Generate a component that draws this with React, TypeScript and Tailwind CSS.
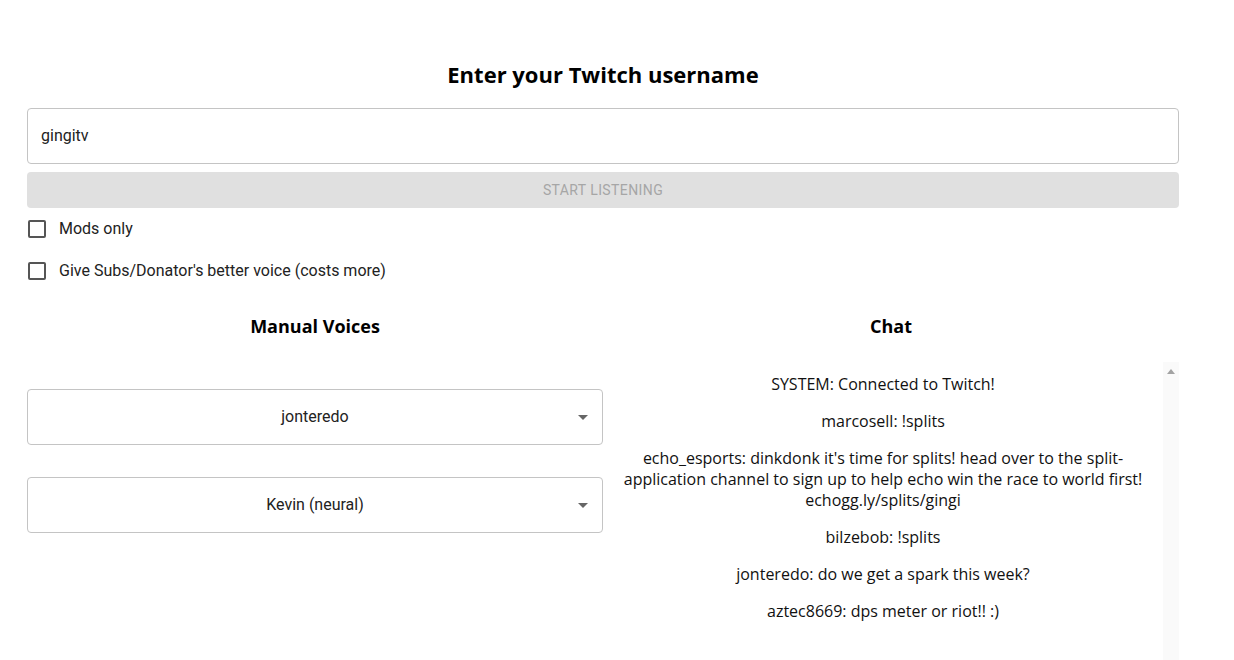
const chat = [
  "SYSTEM: Connected to Twitch!",
  "marcosell: !splits",
  "echo_esports: dinkdonk it's time for splits! head over to the split-application channel to sign up to help echo win the race to world first! echogg.ly/splits/gingi",
  "bilzebob: !splits",
  "jonteredo: do we get a spark this week?",
  "aztec8669: dps meter or riot!! :)",
];

const Check = ({ label }: { label: string }) => (
  <label className="flex items-center gap-[13px] h-[42px] text-[16px] text-[#222]">
    <span className="w-[18px] h-[18px] border-2 border-[#555] rounded-[2px]" />
    {label}
  </label>
);

const Select = ({ value }: { value: string }) => (
  <div className="relative h-[56px] border border-[#c4c4c4] rounded flex items-center justify-center text-[16px] text-[#222]">
    {value}
    <span className="absolute right-[14px] top-[25px] w-0 h-0 border-l-[5px] border-r-[5px] border-t-[5px] border-l-transparent border-r-transparent border-t-[#666]" />
  </div>
);

export default function App() {
  return (
    <div className="h-[660px] bg-white overflow-hidden" style={{ fontFamily: "Roboto, sans-serif" }}>
      <div className="w-[1152px] ml-[27px] pt-[58px]">
        <h1 className="text-center text-[22px] font-bold text-black leading-[32px]" style={{ fontFamily: "'Open Sans', sans-serif" }}>
          Enter your Twitch username
        </h1>
        <div className="mt-[18px] h-[56px] border border-[#c4c4c4] rounded flex items-center px-[13px] text-[16px] text-[#222]">gingitv</div>
        <div className="mt-[8px] h-[36px] bg-[#e0e0e0] rounded flex items-center justify-center text-[14px] tracking-[0.4px] text-[#a6a6a6]">
          START LISTENING
        </div>
        <div className="mt-[0px] pl-[1px]">
          <Check label="Mods only" />
          <Check label="Give Subs/Donator's better voice (costs more)" />
        </div>
        <div className="grid grid-cols-2 mt-[20px]">
          <div>
            <h2 className="text-center text-[18px] font-bold leading-[28px] text-black" style={{ fontFamily: "'Open Sans', sans-serif" }}>Manual Voices</h2>
            <div className="mt-[49px] flex flex-col gap-[32px]">
              <Select value="jonteredo" />
              <Select value="Kevin (neural)" />
            </div>
          </div>
          <div>
            <h2 className="text-center text-[18px] font-bold leading-[28px] text-black" style={{ fontFamily: "'Open Sans', sans-serif" }}>Chat</h2>
            <div className="mt-[22px] flex h-[320px]">
              <div className="flex-1 flex flex-col gap-[16px] pt-[12px] text-center text-[16px] leading-[21px] text-[#111]" style={{ fontFamily: "'Open Sans', sans-serif" }}>
                {chat.map((m, i) => (
                  <p key={i} className="px-[10px]">{m}</p>
                ))}
              </div>
              <div className="w-[16px] bg-[#fafafa] flex justify-center pt-[7px]">
                <span className="w-0 h-0 border-l-[4px] border-r-[4px] border-b-[5px] border-l-transparent border-r-transparent border-b-[#a3a3a3]" />
              </div>
            </div>
          </div>
        </div>
      </div>
    </div>
  );
}
